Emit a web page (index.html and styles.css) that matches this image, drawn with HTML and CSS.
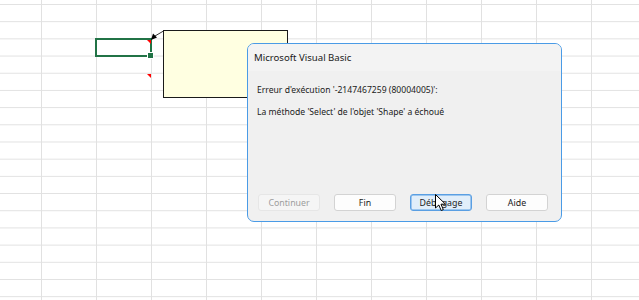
FILE: index.html
```html
<!DOCTYPE html>
<html lang="fr">
<head>
  <meta charset="UTF-8">
  <title>Erreur VBA</title>
  <link rel="stylesheet" href="styles.css">
</head>
<body>

  <div class="sheet">
    <!-- cellule active -->
    <div class="cell-select"><span class="fill-handle"></span></div>

    <!-- indicateurs de commentaire -->
    <span class="comment-mark mark-1"></span>
    <span class="comment-mark mark-2"></span>

    <svg class="connector" width="16" height="14" viewBox="0 0 16 14">
      <line x1="4" y1="9" x2="12.5" y2="4" stroke="#333" stroke-width="1"/>
      <polygon points="0,13 2,6.5 6,10.5" fill="#000"/>
    </svg>

    <div class="comment"></div>

    <div class="dialog">
      <div class="dialog-title">Microsoft Visual Basic</div>
      <div class="dialog-body">
        <p>Erreur d'exécution '-2147467259 (80004005)':</p>
        <p>La méthode 'Select' de l'objet 'Shape' a échoué</p>
      </div>
      <div class="dialog-buttons">
        <button disabled>Continuer</button>
        <button>Fin</button>
        <button class="focused">Débogage</button>
        <button>Aide</button>
      </div>

      <svg class="cursor" width="12" height="18" viewBox="0 0 12 18">
        <path d="M0.5 0.5 L0.5 14 L3.8 11 L6.2 16.5 L8.3 15.6 L6 10.2 L10.5 10.2 Z" fill="#fff" stroke="#000" stroke-width="1" stroke-linejoin="round"/>
      </svg>
    </div>
  </div>

</body>
</html>
```

FILE: styles.css
```css
body {
  margin: 0;
  font-family: 'Noto Sans', 'Open Sans', sans-serif;
  background: #fff;
  overflow: hidden;
}

/* grille de la feuille */
.sheet {
  position: relative;
  width: 639px;
  height: 300px;
  background-image:
    linear-gradient(to right, #e1e1e1 1px, transparent 1px),
    linear-gradient(to bottom, #e1e1e1 1px, transparent 1px);
  background-size: 55px 100%, 100% 17.2px;
  background-position: 41px 0, 0 4px;
}

.cell-select {
  position: absolute;
  left: 95px;
  top: 38px;
  width: 57px;
  height: 19px;
  box-sizing: border-box;
  border: 2px solid #217346;
}

.fill-handle {
  position: absolute;
  right: -4px;
  bottom: -4px;
  width: 5px;
  height: 5px;
  background: #217346;
  border: 1px solid #fff;
}

.comment-mark {
  position: absolute;
  left: 147px;
  width: 0;
  height: 0;
  border-top: 4px solid #f00;
  border-left: 4px solid transparent;
}

.mark-1 { top: 40px; }
.mark-2 { top: 74px; }

.connector {
  position: absolute;
  left: 151px;
  top: 27px;
}

.comment {
  position: absolute;
  left: 163px;
  top: 30px;
  width: 125px;
  height: 68px;
  box-sizing: border-box;
  border: 1px solid #1a1a1a;
  background: #ffffe1;
}

/* boîte de dialogue */
.dialog {
  position: absolute;
  left: 247px;
  top: 43px;
  width: 315px;
  height: 179px;
  box-sizing: border-box;
  display: flex;
  flex-direction: column;
  border: 1px solid #4a9be6;
  border-radius: 7px;
  background: #f0f0f0;
  color: #1a1a1a;
  overflow: hidden;
}

.dialog-title {
  height: 27px;
  line-height: 27px;
  padding-left: 6px;
  font-size: 9.6px;
  background: #f3f3f3;
}

.dialog-body {
  flex: 1;
  padding: 12px 9px 0;
  font-size: 8.6px;
}

.dialog-body p {
  margin: 0 0 8px;
  line-height: 14px;
}

.dialog-buttons {
  display: flex;
  gap: 14px;
  padding: 0 10px 10px;
}

button {
  width: 62px;
  height: 17px;
  padding: 0;
  font-family: inherit;
  font-size: 8.8px;
  color: #1a1a1a;
  background: #fdfdfd;
  border: 1px solid #d3d3d3;
  border-radius: 3px;
}

button:disabled {
  color: #9d9d9d;
  background: #f5f5f5;
  border-color: #e6e6e6;
}

button.focused {
  background: #e1eefa;
  border-color: #5a9fe3;
  box-shadow: inset 0 0 0 0.5px #5a9fe3;
}

.cursor {
  position: absolute;
  left: 187px;
  top: 150px;
}
```
